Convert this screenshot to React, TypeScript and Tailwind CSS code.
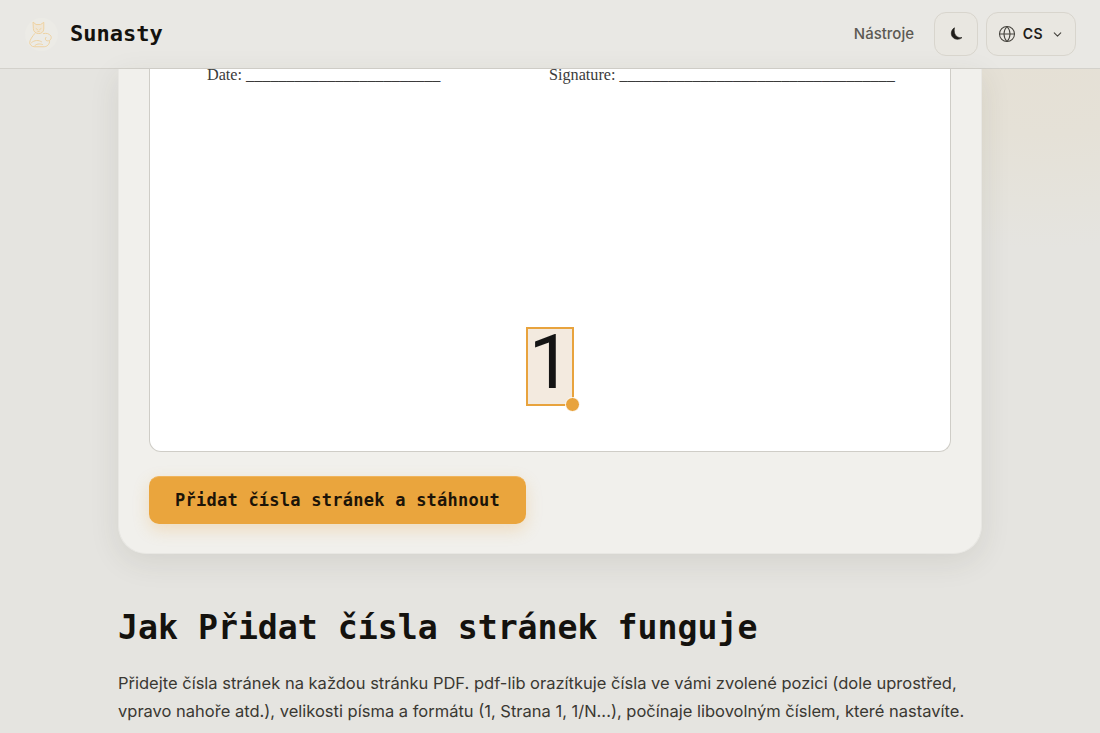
import React from "react";
import { ChevronDown, Globe } from "lucide-react";

function CatLogo() {
  return (
    <svg width="29" height="29" viewBox="0 0 32 32" fill="none" stroke="#eed2a2" strokeWidth="1.1" strokeLinejoin="round" strokeLinecap="round">
      <path d="M7 2.5 L10 5 H15 L18.5 2.5 L18.5 10 C18.5 13 16 15 13 15 C10 15 7 13 7 10 Z" fill="#efe6d6" />
      <path d="M10 9.5 L11.5 10.5 M15.5 9.5 L14 10.5 M12 12.5 H13.5" />
      <path d="M8.5 15 C6 18 3 22 3 25 C3 27 5 29.5 8 29.5 H19 C22 29.5 25 27 25 23" />
      <path d="M18 15 C21 14 25 15 26.5 18 C27.5 21 25 23.5 22 23 C20 22.5 19.5 20 21 19" />
      <path d="M5 25 C8 22 13 22 16 24 M8 29 C10 26 14 26 17 27" />
    </svg>
  );
}

// crescent is thinner than lucide's Moon
function MoonIcon() {
  return (
    <svg width="16" height="16" viewBox="0 0 16 16" fill="#1f1d19" stroke="#1f1d19" strokeWidth="0.6" strokeLinejoin="round">
      <path d="M6.5 1.8 C3.2 3.6 2.4 8 4.4 10.8 C6.6 13.8 11.2 14.2 14 11.6 C10.6 12.2 7.8 10.6 6.8 7.8 C6.2 5.8 6 3.6 6.5 1.8 Z" />
    </svg>
  );
}

export default function App() {
  return (
    <div className="h-[733px] overflow-hidden bg-[#e5e4e0] bg-[radial-gradient(ellipse_300px_190px_at_95%_8%,#e5e0d5_0%,#e5e1d7_40%,#e5e3dc_75%,#e5e4e0_100%)] font-['Inter',sans-serif] text-[#1a1814]">
      <header className="flex h-[69px] items-center justify-between border-b border-[#d3d1cb] bg-[#e9e8e4] pl-[25px] pr-6">
        <div className="flex items-center gap-3">
          <div className="flex h-[33px] w-[33px] items-center justify-center rounded-full bg-[#ecebe6]">
            <CatLogo />
          </div>
          <span className="pb-0.5 font-['DejaVu_Sans_Mono',monospace] text-[22px] font-bold text-[#14120e]">Sunasty</span>
        </div>
        <div className="flex items-center">
          <span className="mr-5 text-[15px] font-medium text-[#5c5a53]">Nástroje</span>
          <button className="flex h-11 w-11 items-center justify-center rounded-xl border border-[#d8d5cd] bg-[#e9e7e1]">
            <MoonIcon />
          </button>
          <button className="ml-2 flex h-11 w-[90px] items-center justify-center rounded-xl border border-[#d8d5cd] bg-[#e9e7e1]">
            <Globe size={18} strokeWidth={1.4} className="text-[#45433d]" />
            <span className="ml-[7px] text-sm font-semibold tracking-[0.03em] text-[#1f1d19]">CS</span>
            <ChevronDown size={13} className="ml-2 text-[#45433d]" />
          </button>
        </div>
      </header>

      <main className="mx-auto w-[864px]">
        <section className="rounded-b-[28px] border-x border-b border-[#e8e7e3] bg-[#f1f0ec] px-[30px] pb-[29px] shadow-[0_8px_30px_rgba(60,55,40,0.1)]">
          <div className="rounded-b-xl border-x border-b border-[#cfcdc7] bg-white pb-[45px]">
            <div className="flex h-[258px] pl-[57px] font-['Liberation_Serif',serif] text-[16.2px] leading-[13px] text-[#3b3b3b]">
              <span className="w-[342px] whitespace-nowrap">Date: ________________________</span>
              <span className="whitespace-nowrap">Signature: __________________________________</span>
            </div>
            <div className="flex justify-center">
              <div className="relative flex h-[79px] w-[48px] items-center justify-center border-2 border-[#e8a33d] bg-[#f3eadf] pb-[10px] font-['Roboto',sans-serif] text-[76px] leading-none font-normal text-[#141414]">
                1
                <span className="absolute bottom-[-8px] right-[-8px] h-[15px] w-[15px] rounded-full border border-white bg-[#e8a33d]" />
              </div>
            </div>
          </div>
          <button className="mt-6 flex h-12 w-[377px] items-center justify-center rounded-[10px] border-t border-[#f0b45c] bg-[#eaa53d] font-['DejaVu_Sans_Mono',monospace] text-[17px] font-bold tracking-[0.25px] text-[#1c1408] shadow-[0_6px_16px_rgba(234,165,61,0.25)]">
            Přidat čísla stránek a stáhnout
          </button>
        </section>

        <h2 className="mt-[51px] font-['DejaVu_Sans_Mono',monospace] text-[33.2px] leading-[46px] font-bold whitespace-nowrap text-[#14120e]">
          Jak Přidat čísla stránek funguje
        </h2>
        <p className="mt-[18px] w-[864px] text-[16.5px] leading-[28px] text-[#3a3832]">
          Přidejte čísla stránek na každou stránku PDF. pdf-lib orazítkuje čísla ve vámi zvolené pozici (dole uprostřed, vpravo nahoře atd.), velikosti písma a formátu (1, Strana 1, 1/N...), počínaje libovolným číslem, které nastavíte.
        </p>
      </main>
    </div>
  );
}
